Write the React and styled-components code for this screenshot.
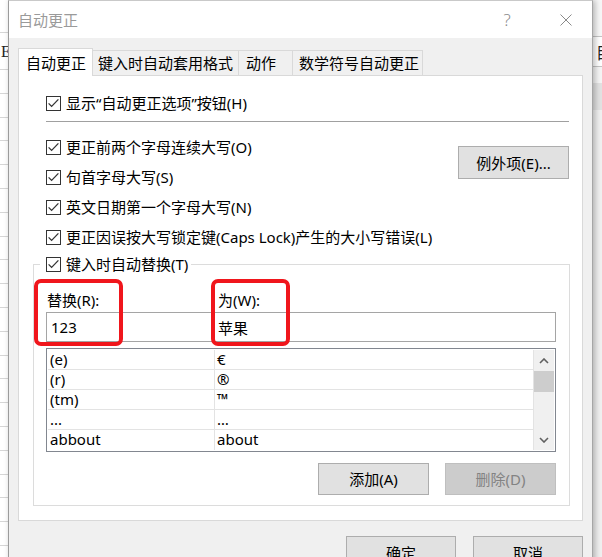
import React from 'react';
import styled, { createGlobalStyle } from 'styled-components';

const GlobalStyle = createGlobalStyle`
  html, body { margin: 0; padding: 0; }
  body {
    font-family: "Noto Sans", "Noto Sans CJK SC", sans-serif;
    background: #ffffff;
    color: #000;
  }
  * { box-sizing: border-box; }
`;

const Desktop = styled.div`
  width: 602px;
  height: 557px;
  overflow: hidden;
  display: flex;
  align-items: flex-start;
  background: #fff;
`;

/* ---------- spreadsheet behind the dialog ---------- */
const SheetLeft = styled.div`
  width: 8px;
  height: 557px;
  flex: none;
  display: flex;
  flex-direction: column;
  overflow: hidden;
  background: #fff;
`;

const SheetCell = styled.div`
  flex: none;
  height: ${(p) => p.$h}px;
  border-bottom: 1px solid #d6d6d6;
  background: ${(p) => p.$bg || '#fff'};
  font-family: "Liberation Serif", serif;
  font-size: 16px;
  line-height: ${(p) => p.$h}px;
  color: #222;
  padding-left: 1px;
  white-space: nowrap;
`;

const SheetRight = styled.div`
  width: 9px;
  height: 557px;
  flex: none;
  display: flex;
  flex-direction: column;
  overflow: hidden;
  background: #f3f3f3;
`;

const RightCell = styled.div`
  flex: none;
  height: ${(p) => p.$h}px;
  border-bottom: ${(p) => (p.$line ? '1px solid #c4c4c4' : 'none')};
  background: ${(p) => p.$bg || '#f7f7f7'};
  font-family: "Noto Sans CJK SC", sans-serif;
  font-size: 16px;
  line-height: ${(p) => p.$h}px;
  padding-left: 3px;
  white-space: nowrap;
  color: #222;
`;

/* ---------- dialog ---------- */
const Dialog = styled.div`
  position: relative;
  z-index: 1;
  width: 585px;
  flex: none;
  display: flex;
  flex-direction: column;
  background: #f0f0f0;
  border-left: 1px solid #9b9b9b;
  border-right: 1px solid #a6a6a6;
  border-top: 1px solid #c9c9c9;
  box-shadow: 2px 0 6px rgba(0, 0, 0, 0.28);
`;

const TitleBar = styled.div`
  height: 37px;
  display: flex;
  align-items: center;
  background: #fff;
  padding: 0 11px 0 9px;
`;

const Title = styled.div`
  flex: 1;
  font-family: "Noto Sans CJK SC", sans-serif;
  font-size: 15px;
  line-height: 20px;
  color: #9a9a9a;
`;

const CaptionButton = styled.div`
  width: 30px;
  height: 30px;
  display: flex;
  align-items: center;
  justify-content: center;
  margin-left: ${(p) => p.$gap || 0}px;
  color: #8a8a8a;
  font-family: "Noto Sans", sans-serif;
  font-size: 17px;
  font-weight: 300;
  line-height: 20px;
`;

const Body = styled.div`
  display: flex;
  flex-direction: column;
  padding: 10px 9px 0 9px;
`;

const TabStrip = styled.div`
  height: 27px;
  display: flex;
  align-items: flex-end;
`;

const Tab = styled.div`
  flex: none;
  width: ${(p) => p.$w}px;
  height: ${(p) => (p.$active ? 28 : 25)}px;
  margin-left: ${(p) => (p.$first ? 0 : -1)}px;
  margin-bottom: ${(p) => (p.$active ? -1 : 0)}px;
  position: relative;
  z-index: ${(p) => (p.$active ? 2 : 1)};
  background: ${(p) => (p.$active ? '#fff' : '#f0f0f0')};
  border: 1px solid #d9d9d9;
  border-bottom: none;
  padding-left: ${(p) => p.$pl}px;
  padding-top: ${(p) => (p.$active ? 3 : 1)}px;
  font-size: 15px;
  line-height: 22px;
  white-space: nowrap;
`;

const Panel = styled.div`
  background: #fff;
  border: 1px solid #d9d9d9;
  display: flex;
  flex-direction: column;
  padding: 12px 12px 14px 14px;
`;

const Upper = styled.div`
  display: flex;
  flex-direction: column;
  padding: 0 1px 0 13px;
`;

const CheckRow = styled.div`
  height: 30px;
  display: flex;
  align-items: center;
  gap: 5px;
  font-size: 15px;
  line-height: 20px;
  white-space: nowrap;
`;

const Separator = styled.div`
  height: 1px;
  margin-top: 3px;
  background: #a0a0a0;
`;

const Options = styled.div`
  margin-top: 10px;
  display: flex;
  justify-content: space-between;
  align-items: flex-start;
`;

const OptionList = styled.div`
  display: flex;
  flex-direction: column;
`;

const Button = styled.div`
  flex: none;
  width: ${(p) => p.$w || 111}px;
  height: ${(p) => p.$h || 32}px;
  margin-top: ${(p) => p.$mt || 0}px;
  display: flex;
  align-items: center;
  justify-content: center;
  background: ${(p) => (p.$disabled ? '#cccccc' : '#e1e1e1')};
  border: 1px solid ${(p) => (p.$disabled ? '#bfbfbf' : '#adadad')};
  color: ${(p) => (p.$disabled ? '#838383' : '#000')};
  font-size: 15px;
  line-height: 20px;
  white-space: nowrap;
`;

const Group = styled.fieldset`
  margin: 1px 0 0 0;
  padding: 14px 13px 10px 12px;
  border: 1px solid #dcdcdc;
  min-width: 0;
  display: flex;
  flex-direction: column;
`;

const Legend = styled.legend`
  margin-left: -6px;
  padding: 0 3px 0 6px;
  height: 22px;
  display: flex;
  align-items: center;
  gap: 5px;
  font-size: 15px;
  line-height: 22px;
  white-space: nowrap;
`;

const FieldArea = styled.div`
  position: relative;
  display: grid;
  grid-template-columns: 168px 1fr;
  grid-template-rows: 23px 30px;
`;

const FieldLabel = styled.div`
  padding-left: ${(p) => p.$pl}px;
  font-size: 15px;
  line-height: 22px;
  white-space: nowrap;
`;

const TextBox = styled.input`
  height: 30px;
  width: auto;
  min-width: 0;
  margin: 0 0 0 ${(p) => p.$ml || 0}px;
  border: 1px solid #a5a5a5;
  padding: 0 0 0 ${(p) => p.$pl}px;
  font-family: "Noto Sans", "Noto Sans CJK SC", sans-serif;
  font-size: 15px;
  color: #000;
  background: #fff;
  outline: none;
`;

const Marker = styled.div`
  position: absolute;
  left: ${(p) => p.$x}px;
  top: -10px;
  width: ${(p) => p.$w}px;
  height: 67px;
  border: 4px solid #f0161c;
  border-radius: 7px;
  z-index: 3;
  pointer-events: none;
`;

const ListBox = styled.div`
  margin-top: 6px;
  height: 104px;
  border: 1px solid #828790;
  padding: 1px;
  display: flex;
`;

const Rows = styled.div`
  flex: 1;
  display: flex;
  flex-direction: column;
  border-right: 1px solid #e3e3e3;
`;

const Row = styled.div`
  height: 20px;
  flex: none;
  display: grid;
  grid-template-columns: 167px 1fr;
  border-bottom: ${(p) => (p.$last ? 'none' : '1px solid #e3e3e3')};
`;

const Cell = styled.div`
  padding-left: 2px;
  font-size: 15px;
  line-height: 19px;
  white-space: nowrap;
  border-right: ${(p) => (p.$first ? '1px solid #e3e3e3' : 'none')};
`;

const ScrollBar = styled.div`
  width: 20px;
  flex: none;
  display: flex;
  flex-direction: column;
  background: #f0f0f0;
`;

const ScrollArrow = styled.div`
  height: 21px;
  flex: none;
  display: flex;
  align-items: center;
  justify-content: center;
`;

const ScrollThumb = styled.div`
  height: 21px;
  flex: none;
  background: #cdcdcd;
`;

const ScrollTrack = styled.div`
  flex: 1;
`;

const ButtonRow = styled.div`
  margin-top: 11px;
  display: flex;
  justify-content: flex-end;
  gap: ${(p) => p.$gap}px;
`;

const Footer = styled.div`
  padding-top: 15px;
  display: flex;
  justify-content: flex-end;
  gap: 17px;
`;

/* ---------- drawings ---------- */
const CheckBox = () => (
  <svg width="15" height="15" viewBox="0 0 15 15" style={{ flex: 'none' }}>
    <rect x="0.5" y="0.5" width="14" height="14" fill="#fff" stroke="#333" />
    <path d="M2.6 7.4 L5.6 10.4 L12.4 3.4" fill="none" stroke="#333" strokeWidth="1.3" />
  </svg>
);

const CloseGlyph = () => (
  <svg width="12" height="12" viewBox="0 0 12 12">
    <path d="M0.5 0.5 L11.5 11.5 M11.5 0.5 L0.5 11.5" stroke="#8a8a8a" strokeWidth="1" fill="none" />
  </svg>
);

const Chevron = ({ down }) => (
  <svg width="10" height="6" viewBox="0 0 10 6">
    <path
      d={down ? 'M1 1 L5 5 L9 1' : 'M1 5 L5 1 L9 5'}
      stroke="#606060"
      strokeWidth="1.6"
      fill="none"
    />
  </svg>
);

const options = [
  '更正前两个字母连续大写(O)',
  '句首字母大写(S)',
  '英文日期第一个字母大写(N)',
  '更正因误按大写锁定键(Caps Lock)产生的大小写错误(L)',
];

const entries = [
  ['(e)', '€'],
  ['(r)', '®'],
  ['(tm)', '™'],
  ['...', '…'],
  ['abbout', 'about'],
];

const tabs = [
  { label: '自动更正', w: 75, pl: 7, active: true },
  { label: '键入时自动套用格式', w: 147, pl: 5 },
  { label: '动作', w: 55, pl: 7 },
  { label: '数学符号自动更正', w: 131, pl: 6 },
];

const leftRows = [33, 37, 23.8, 23.8, 23.8, 23.8, 23.8, 23.8, 23.8, 23.8, 23.8, 23.8, 23.8, 23.8, 23.8, 23.8, 23.8, 23.8, 23.8, 23.8, 23.8, 23.8];

export default function App() {
  return (
    <>
      <GlobalStyle />
      <Desktop>
        <SheetLeft>
          {leftRows.map((h, i) => (
            <SheetCell key={i} $h={h}>
              {i === 1 ? 'E' : ''}
            </SheetCell>
          ))}
        </SheetLeft>

        <Dialog>
          <TitleBar>
            <Title>自动更正</Title>
            <CaptionButton>?</CaptionButton>
            <CaptionButton $gap={29}>
              <CloseGlyph />
            </CaptionButton>
          </TitleBar>

          <Body>
            <TabStrip>
              {tabs.map((t, i) => (
                <Tab key={t.label} $w={t.w} $pl={t.pl} $active={t.active} $first={i === 0}>
                  {t.label}
                </Tab>
              ))}
            </TabStrip>

            <Panel>
              <Upper>
                <CheckRow>
                  <CheckBox />
                  <span>显示{'\u201c'}自动更正选项{'\u201d'}按钮(H)</span>
                </CheckRow>
                <Separator />
                <Options>
                  <OptionList>
                    {options.map((o) => (
                      <CheckRow key={o}>
                        <CheckBox />
                        <span>{o}</span>
                      </CheckRow>
                    ))}
                  </OptionList>
                  <Button $mt={14} $w={111} $h={33}>
                    例外项(E)...
                  </Button>
                </Options>
              </Upper>

              <Group>
                <Legend>
                  <CheckBox />
                  <span>键入时自动替换(T)</span>
                </Legend>

                <FieldArea>
                  <FieldLabel $pl={1}>替换(R):</FieldLabel>
                  <FieldLabel $pl={4}>为(W):</FieldLabel>
                  <TextBox readOnly value="123" $pl={4} />
                  <TextBox readOnly value="苹果" $pl={4} $ml={-1} />
                  <Marker $x={-12} $w={89} />
                  <Marker $x={165} $w={79} />
                </FieldArea>

                <ListBox>
                  <Rows>
                    {entries.map(([a, b], i) => (
                      <Row key={a} $last={i === entries.length - 1}>
                        <Cell $first>{a}</Cell>
                        <Cell>{b}</Cell>
                      </Row>
                    ))}
                  </Rows>
                  <ScrollBar>
                    <ScrollArrow>
                      <Chevron />
                    </ScrollArrow>
                    <ScrollThumb />
                    <ScrollTrack />
                    <ScrollArrow>
                      <Chevron down />
                    </ScrollArrow>
                  </ScrollBar>
                </ListBox>

                <ButtonRow $gap={16}>
                  <Button>添加(A)</Button>
                  <Button $disabled>删除(D)</Button>
                </ButtonRow>
              </Group>
            </Panel>

            <Footer>
              <Button $w={110} $h={33}>确定</Button>
              <Button $w={110} $h={33}>取消</Button>
            </Footer>
          </Body>
        </Dialog>

        <SheetRight>
          <RightCell $h={37} $line $bg="#f7f7f7" />
          <RightCell $h={30} $line $bg="#ffffff">目</RightCell>
          <RightCell $h={16} $bg="#f5f5f5" />
          <RightCell $h={27} $bg="#e2e2e2" />
          <RightCell $h={447} $bg="#f0f0f0" />
        </SheetRight>
      </Desktop>
    </>
  );
}
